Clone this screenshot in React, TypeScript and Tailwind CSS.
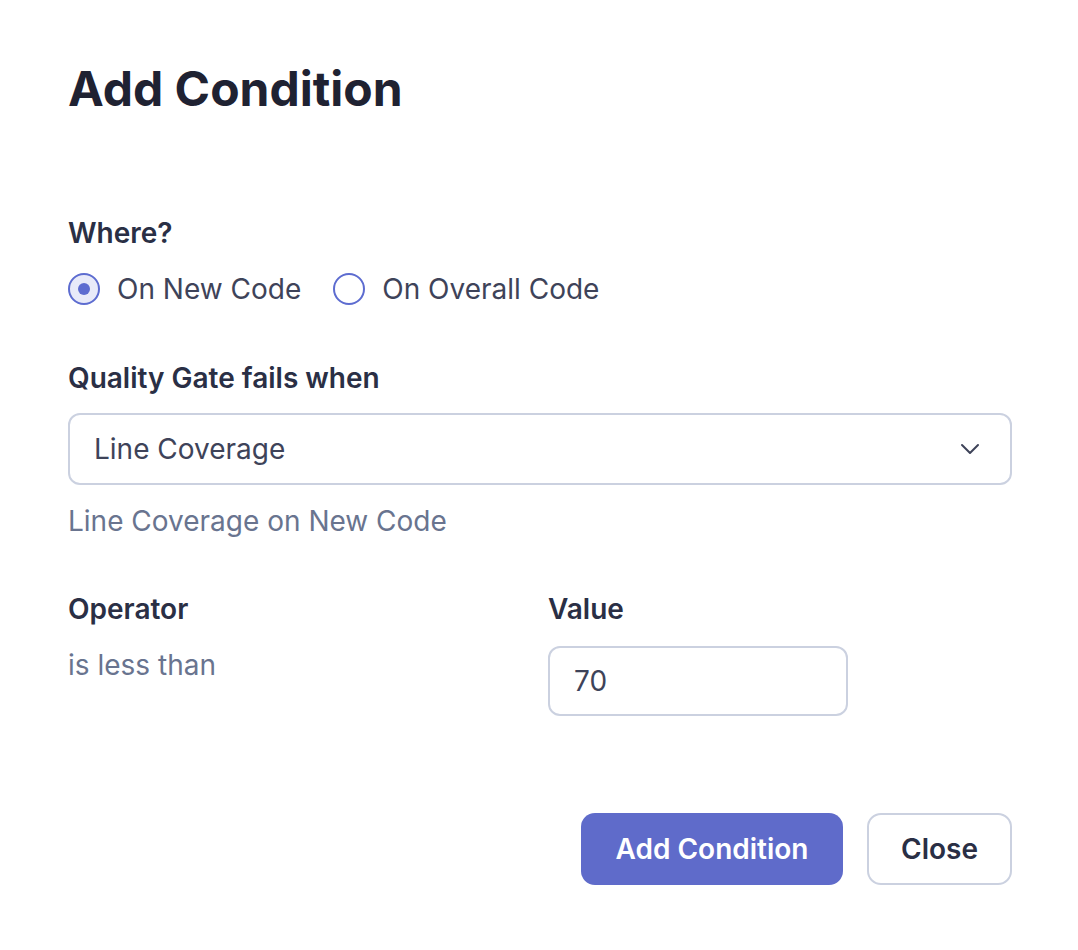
function Radio({ label, checked }: { label: string; checked?: boolean }) {
  return (
    <label className="flex items-center gap-[17px] cursor-pointer">
      <span
        className={`flex h-8 w-8 items-center justify-center rounded-full border-2 border-[#5d6cd0] ${
          checked ? "bg-[#e8eaf9]" : "bg-white"
        }`}
      >
        {checked && <span className="h-3 w-3 rounded-full bg-[#5d6cd0]" />}
      </span>
      <span className="text-[28px] leading-10 text-[#3e4359]">{label}</span>
    </label>
  );
}

export default function App() {
  return (
    <div
      className="min-h-[950px] bg-white pl-[68px] pr-[66px] pt-[57px] text-[#2a2f45]"
      style={{ fontFamily: "Inter, 'Noto Sans', sans-serif" }}
    >
      <h1 className="text-[48px] font-bold leading-[64px] text-[#1f2232]">Add Condition</h1>

      <div className="mt-[92px]">
        <h2 className="text-[28px] font-semibold leading-10">Where?</h2>
        <div className="mt-4 flex items-center gap-8">
          <Radio label="On New Code" checked />
          <Radio label="On Overall Code" />
        </div>
      </div>

      <div className="mt-[49px]">
        <h2 className="text-[28px] font-semibold leading-10">Quality Gate fails when</h2>
        <button className="mt-[15px] flex h-[72px] w-full items-center justify-between rounded-xl border-2 border-[#cbd1e0] bg-white pl-6 pr-[30px]">
          <span className="text-[28px] text-[#3e4359]">Line Coverage</span>
          <svg width="20" height="12" viewBox="0 0 20 12" fill="none" className="text-[#3e4359]">
            <path d="M2 2l8 8 8-8" stroke="currentColor" strokeWidth="2" strokeLinecap="round" strokeLinejoin="round" />
          </svg>
        </button>
        <p className="mt-4 text-[28px] leading-10 text-[#69748f]">Line Coverage on New Code</p>
      </div>

      <div className="mt-12 grid grid-cols-[480px_1fr] items-start">
        <div>
          <h2 className="text-[28px] font-semibold leading-10">Operator</h2>
          <p className="mt-4 text-[28px] leading-10 text-[#69748f]">is less than</p>
        </div>
        <div>
          <h2 className="text-[28px] font-semibold leading-10">Value</h2>
          <input
            defaultValue="70"
            className="mt-[17px] h-[70px] w-[300px] rounded-xl border-2 border-[#cbd1e0] px-6 text-[28px] text-[#3e4359] outline-none"
          />
        </div>
      </div>

      <div className="mt-[97px] flex justify-end gap-6">
        <button className="h-[72px] w-[262px] rounded-[14px] bg-[#5f6bca] text-[28px] font-semibold text-white">
          Add Condition
        </button>
        <button className="h-[72px] w-[145px] rounded-[14px] border-2 border-[#cbd1e0] bg-white text-[28px] font-semibold text-[#2a2f45]">
          Close
        </button>
      </div>
    </div>
  );
}
